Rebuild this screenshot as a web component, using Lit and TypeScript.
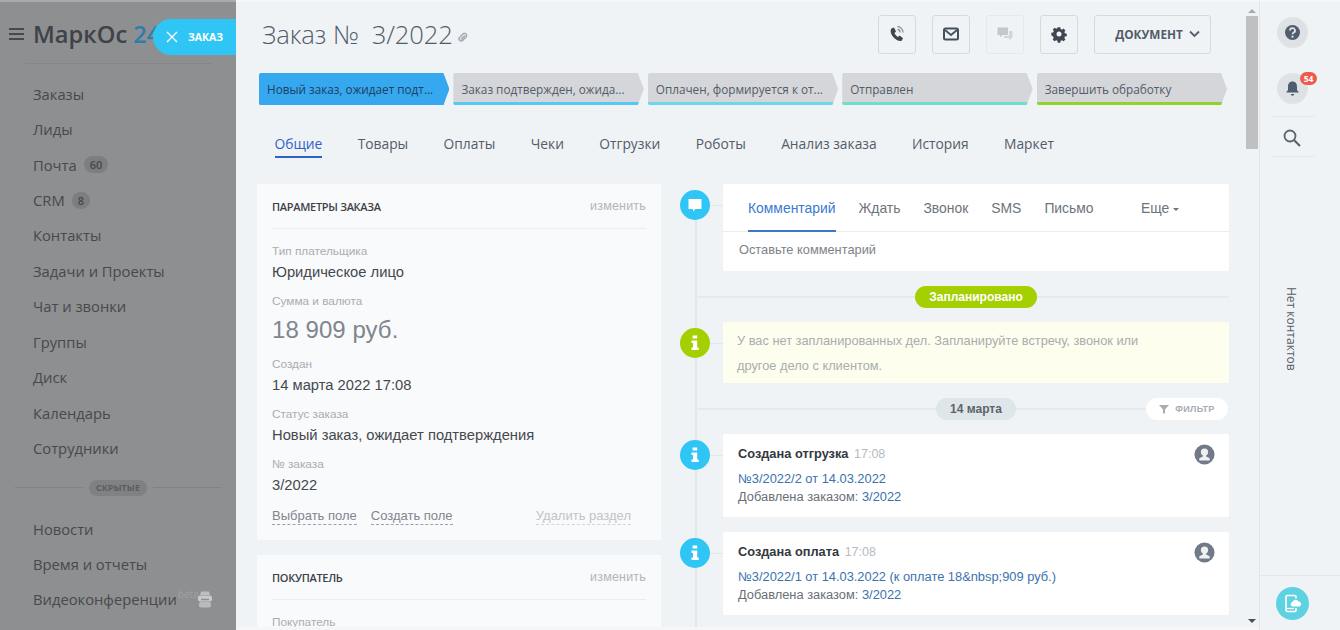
import { LitElement, html, css, svg } from "lit";
import { customElement } from "lit/decorators.js";

const person = html`<svg class="person" viewBox="0 0 22 22"><circle cx="11" cy="11" r="10.5" fill="#707b87"/><circle cx="11" cy="8.4" r="3.8" fill="#eef1f3"/><path d="M9.6 11h2.8l.4 2.2 3.6 1.6v2.4H5.6v-2.4l3.6-1.6z" fill="#eef1f3"/></svg>`;
const infoGlyph = svg`<path d="M12.6 7.5h4.6v2.9h-4.6zM12.6 12.4h4.6v7.2h1.5v2.5h-7.2v-2.5h1.5v-4.7h-1.5v-2.5h1.1z" fill="#fff"/>`;
const info = (c: string) => html`<svg class="node" viewBox="0 0 30 30"><ellipse cx="15" cy="15" rx="15" ry="15" fill="${c}"/>${infoGlyph}</svg>`;

@customElement("app-root")
export class AppRoot extends LitElement {
  static styles = css`
    :host { display: block; width: 1340px; height: 630px; overflow: hidden; font-family: "Liberation Sans", Arial, sans-serif; }
    * { box-sizing: border-box; }
    .page { position: relative; display: grid; grid-template-columns: 236px 1fr 81px; width: 1340px; height: 630px; overflow: hidden; background: #eff3f6; }
    .side { background: #8e8f91; border-top: 2px solid #a9aaac; color: #47494d; font-family: "Open Sans", sans-serif; font-size: 14.75px; overflow: hidden; }
    .logo { display: flex; align-items: center; gap: 9px; height: 61px; padding: 2px 0 0 9px; font-size: 23.7px; font-weight: 600; color: #3e4349; white-space: nowrap; }
    .logo b { font-weight: 600; color: #2f7dab; }
    .burger { width: 15px; height: 12px; border-top: 2px solid #45484c; border-bottom: 2px solid #45484c; position: relative; flex: none; }
    .burger::after { content: ""; position: absolute; left: 0; right: 0; top: 3px; height: 2px; background: #45484c; }
    .logo-line { height: 1px; margin: 0 24px 12px 25px; background: #858688; }
    .item { display: flex; align-items: center; gap: 7px; height: 35.45px; padding-left: 33px; white-space: nowrap; }
    .count { font-size: 11px; font-weight: 600; height: 17px; line-height: 17px; padding: 0 6px; border-radius: 9px; background: #7d7e80; color: #46484b; }
    .hidden-row { display: flex; align-items: center; gap: 6px; padding: 0 15px; margin: 14px 0 15px; }
    .hidden-row i { flex: 1; height: 1px; background: #808183; }
    .hidden-row span { font-size: 9px; font-weight: 700; line-height: 16px; height: 16px; padding: 0 7px; border-radius: 8px; background: #808183; color: #5b5d60; }
    .beta { font-size: 10px; line-height: 12px; color: #a0a1a3; margin: -10px 0 0 -6px; flex: none; }
    .vid { margin-left: -9px; width: 16px; height: 19px; flex: none; }

    .pill { position: absolute; left: 153px; top: 19px; width: 83px; height: 36px; border-radius: 18px 0 0 18px; background: #2fc6f6; display: flex; align-items: center; gap: 10px; padding-left: 13px; color: #fff; font: 700 10.5px "Open Sans", sans-serif; }
    .pill svg { width: 12px; height: 12px; }

    .main { position: relative; min-width: 0; border-top: 2px solid #f6f7f8; border-bottom: 3px solid #f4f6f7; padding: 0 0 0 21px; overflow: hidden; }
    .scroll { position: absolute; right: 1px; top: 0; bottom: 0; width: 13px; display: flex; flex-direction: column; align-items: center; padding-top: 7px; }
    .arr { width: 0; height: 0; border-left: 4px solid transparent; border-right: 4px solid transparent; }
    .arr.up { border-bottom: 4px solid #a8acaf; }
    .arr.down { border-top: 4px solid #4b4f53; position: absolute; bottom: 4px; }
    .thumb { width: 12px; height: 133px; margin-top: 3px; background: #bfc0c1; }

    .head { display: flex; align-items: center; height: 52px; margin-top: 6px; margin-right: 48px; padding-left: 5px; }
    .title { font: 300 25.6px "Open Sans", sans-serif; color: #525c69; letter-spacing: -.1px; white-space: pre; }
    .clip { width: 12px; height: 12px; margin: 6px 0 0 4px; }
    .spacer { flex: 1; }
    .btn { width: 38px; height: 39px; border: 1.5px solid #d6dade; border-radius: 3px; display: flex; align-items: center; justify-content: center; margin-left: 16px; }
    .btn.off { border-color: #e6e9ec; }
    .btn svg { width: 18px; height: 18px; }
    .doc { width: 117px; gap: 6px; font: 700 11.8px "Open Sans", sans-serif; color: #535c69; padding-left: 10px; }
    .doc svg { width: 11px; height: 8px; }

    .stages { display: flex; gap: 4px; margin: 13px 32px 0 2px; height: 32px; }
    .stage { position: relative; flex: 1; min-width: 0; height: 32px; padding: 8px 0 0 8px; background: #d4d6d9; color: #535c69; font: 400 11.75px/16px "Open Sans", sans-serif; white-space: nowrap; overflow: hidden; clip-path: polygon(0 0, calc(100% - 6px) 0, 100% 50%, calc(100% - 6px) 100%, 0 100%); border-radius: 2px; }
    .stage::after { content: ""; position: absolute; left: 0; right: 0; bottom: 0; height: 3px; background: var(--c); }
    .stage.on { background: #36a8f0; color: #1e3f5e; }

    .tabs { display: flex; gap: 35.3px; margin: 27px 0 0 17.5px; height: 26px; font: 400 13.8px/24px "Open Sans", sans-serif; color: #535c69; }
    .tabs span { white-space: nowrap; height: 26px; }
    .tabs .on { color: #2d63c8; border-bottom: 2px solid #2d63c8; }

    .cols { display: flex; gap: 19px; margin-top: 26px; align-items: flex-start; }
    .left { width: 404px; flex: none; display: flex; flex-direction: column; gap: 15px; }
    .card { background: #f9fafb; padding: 0 15px; }
    .card-h { display: flex; justify-content: space-between; align-items: center; height: 45px; border-bottom: 1px solid #eaedef; }
    .card-h b { font: 600 11px "Open Sans", sans-serif; color: #3c4249; letter-spacing: -.3px; }
    .card-h span { font-size: 12.5px; color: #b1b5b9; letter-spacing: .2px; }
    .lab { font-size: 11.8px; color: #a8adb3; line-height: 15px; margin-top: 12px; }
    .card-h + .lab { margin-top: 14.5px; }
    .val { font-size: 14.75px; color: #45494e; line-height: 20px; margin-top: 3px; }
    .sum { font-size: 24px; color: #80868e; line-height: 33px; margin-top: 4px; letter-spacing: .05px; }
    .sum + .lab { margin-top: 11.5px; }
    .acts { display: flex; gap: 14px; height: 45px; padding: 12.5px 15px 0 0; font-size: 13px; color: #80868e; }
    .acts span { height: 17px; border-bottom: 1px dashed #9ba1a7; }
    .acts .del { margin-left: auto; color: #c0c4c8; border-bottom-color: #d2d5d8; }
    .buyer { height: 90px; }

    .right { position: relative; width: 549px; flex: none; margin-right: 30px; }
    .line { position: absolute; left: 15px; top: 20px; height: 600px; width: 2px; background: #e1e6e9; }
    .row { position: relative; padding-left: 43px; display: block; }
    .node { position: absolute; left: 0; width: 30px; height: 30px; display: block; }
    .row::before { content: ""; position: absolute; left: 17px; width: 26px; height: 1px; background: #e1e6e9; top: 21px; }
    .box { background: #fff; border-radius: 2px; }
    .ctabs { display: flex; height: 48px; padding-left: 25px; border-bottom: 1px solid #e9edf0; font-size: 13.9px; line-height: 48px; color: #6d737a; }
    .ctabs span { margin-right: 23px; white-space: nowrap; }
    .ctabs .on { color: #3b78cf; border-bottom: 2px solid #3b78cf; height: 48px; }
    .ctabs .more { margin: 0; position: absolute; left: 461px; }
    .more::after { content: ""; display: inline-block; margin-left: 4px; vertical-align: 2px; border-left: 3px solid transparent; border-right: 3px solid transparent; border-top: 3px solid #6d737a; }
    .hint { height: 39px; padding-left: 16px; font-size: 12.8px; line-height: 36px; color: #7c8289; }
    .sep { position: relative; display: flex; justify-content: center; align-items: center; height: 22px; margin-left: 15px; padding-left: 28px; }
    .sep::before { content: ""; position: absolute; left: 0; right: 0; top: 10px; height: 2px; background: #e6eaed; }
    .tag { position: relative; height: 22px; border-radius: 11px; font-size: 12px; font-weight: 700; line-height: 22px; padding: 0 14px; }
    .green { background: #a4cf00; color: #fff; }
    .date { background: #dfe6e9; color: #5d6369; width: 80px; padding: 0; text-align: center; }
    .filter { position: absolute; right: 1px; top: 0; width: 82px; height: 22px; border-radius: 11px; background: #fff; color: #a8adb2; font-size: 9px; font-weight: 700; line-height: 22px; display: flex; align-items: center; justify-content: center; gap: 6px; letter-spacing: .3px; }
    .filter svg { width: 10px; height: 9px; }
    .yellow { background: #fefeee; height: 61px; padding: 6px 14px; font-size: 12.8px; line-height: 25px; color: #a9adaf; }
    .ev { position: relative; height: 83px; padding: 10px 15px; font-size: 12.85px; line-height: 18px; color: #6a7076; }
    .ev h4 { margin: 0 0 6px; font-size: 12.8px; line-height: 20px; font-weight: 700; color: #33383d; }
    .ev h4 span { font-weight: 400; color: #b7bbbf; font-size: 12.5px; margin-left: 2px; }
    .ev a { color: #3b72ad; }
    .person { position: absolute; right: 14px; top: 10px; width: 21px; height: 21px; }
    .pin { position: absolute; left: 0; top: 6px; display: block; }

    .rail { position: relative; border-left: 1px solid #e2e6e9; background: #f0f3f6; border-top: 2px solid #f6f7f8; display: flex; flex-direction: column; align-items: center; padding: 0 15px 0 0; }
    .cir { width: 31px; height: 31px; border-radius: 50%; background: #dfe2e5; display: flex; align-items: center; justify-content: center; flex: none; }
    .cir svg { width: 17px; height: 17px; }
    .help { margin-top: 15px; }
    .bell { position: relative; margin-top: 25px; }
    .badge { position: absolute; left: 23px; top: -1px; height: 13px; width: 17px; border-radius: 7px; background: #ef5a4c; color: #fff; font: 700 8.5px/13px "Open Sans", sans-serif; text-align: center; }
    .rline { height: 1px; width: 44px; background: #e5e8ea; flex: none; }
    .search { width: 20px; height: 20px; margin: 11px 0 8px -1px; flex: none; }
    .none { writing-mode: vertical-rl; font: 400 12px "Open Sans", sans-serif; color: #535c69; margin: 130px 2px 0 0; white-space: nowrap; height: 90px; }
    .rfoot { position: absolute; left: 0; right: 0; top: 573px; height: 1px; background: #e5e8ea; }
    .phone { position: absolute; left: 16px; top: 585px; width: 33px; height: 33px; border-radius: 50%; background: #5fd2e2; display: flex; align-items: center; justify-content: center; }
    .phone svg { width: 21px; height: 21px; }
  `;

  render() {
    const nav = ["Заказы", "Лиды", "Почта|60", "CRM|8", "Контакты", "Задачи и Проекты", "Чат и звонки", "Группы", "Диск", "Календарь", "Сотрудники"];
    const stages: [string, string][] = [
      ["Новый заказ, ожидает подт...", "#36a8f0"], ["Заказ подтвержден, ожида...", "#55c8f4"],
      ["Оплачен, формируется к от...", "#6fd5e8"], ["Отправлен", "#6fe0c8"], ["Завершить обработку", "#8fd32c"],
    ];
    const tabs = ["Товары", "Оплаты", "Чеки", "Отгрузки", "Роботы", "Анализ заказа", "История", "Маркет"];
    return html`<div class="page">
      <aside class="side">
        <div class="logo"><span class="burger"></span><span>МаркОс <b>24</b></span></div>
        <div class="logo-line"></div>
        ${nav.map((n) => { const [t, c] = n.split("|"); return html`<div class="item">${t}${c ? html`<span class="count">${c}</span>` : ""}</div>`; })}
        <div class="hidden-row"><i></i><span>СКРЫТЫЕ</span><i></i></div>
        <div class="item">Новости</div>
        <div class="item">Время и отчеты</div>
        <div class="item">Видеоконференции<span class="beta">beta</span>
          <svg class="vid" viewBox="0 0 16 19"><path d="M4 1.5h8l1 3.500H3z" fill="#bdbec0"/><rect x="1" y="5.500" width="14" height="6" rx="2" fill="#c9cacb"/><rect x="2" y="12" width="12" height="5.500" rx="2" fill="#b9babc"/><path d="M4 9.500h8" stroke="#8e8f91" stroke-width="1.500"/></svg></div>
      </aside>

      <main class="main">
        <div class="head">
          <span class="title">Заказ №  3/2022</span>
          <svg class="clip" viewBox="0 0 12 12"><path d="M4 8.500l4-4M2.800 6.300L6 3a2 2 0 0 1 3 3L5.600 9.400a2 2 0 0 1-2.900-3" fill="none" stroke="#a5abb1" stroke-width="1.500"/></svg>
          <span class="spacer"></span>
          <span class="btn"><svg viewBox="0 0 18 18"><path d="M3.500 3.500l2.500-1 2 4L6.500 8c.5 1.500 2 3.300 3.600 4l1.600-1.400 3.300 2.600-1.200 2.300c-1 1-3 .6-5-.5C6 13.500 3.500 10.500 2.800 7.500 2.500 6 2.700 4.500 3.500 3.500z" fill="#3d4651"/><path d="M9.500 1.500a6 6 0 0 1 5.500 6M9.500 4.500a3 3 0 0 1 2.700 3" fill="none" stroke="#8a929b" stroke-width="1.300"/></svg></span>
          <span class="btn"><svg viewBox="0 0 18 18"><rect x="2" y="3.500" width="14" height="11" rx="1.500" fill="none" stroke="#46505c" stroke-width="2"/><path d="M3 5l6 5 6-5" fill="none" stroke="#46505c" stroke-width="1.800"/></svg></span>
          <span class="btn off"><svg viewBox="0 0 18 18"><path d="M1.500 2.500h10.500v7.500H6.500L4 12v-2H1.500z" fill="#c3c8cc"/><path d="M13 6h3.500v7H15v2.500L12.500 13H8v-2h5z" fill="#d2d6d9"/></svg></span>
          <span class="btn"><svg viewBox="0 0 18 18"><path d="M7.500 1h3l.4 2.200 1.500.7 1.900-1.200 2.100 2.100-1.200 1.900.6 1.500 2.200.4v3l-2.200.4-.6 1.500 1.200 1.900-2.100 2.100-1.900-1.200-1.500.6-.4 2.200h-3l-.4-2.200-1.500-.6-1.900 1.200-2.100-2.100 1.200-1.900-.7-1.500L0 10.500v-3l2.200-.4.700-1.500-1.200-1.900 2.100-2.100 1.900 1.200 1.400-.7z" transform="translate(1.300 1.300) scale(.86)" fill="#3d4651"/><circle cx="9" cy="9" r="2.500" fill="#eff3f6"/></svg></span>
          <span class="btn doc">ДОКУМЕНТ<svg viewBox="0 0 11 8"><path d="M1 1.500l4.500 4.500L10 1.500" fill="none" stroke="#535c69" stroke-width="1.800"/></svg></span>
        </div>
        <div class="stages">
          ${stages.map(([t, c], i) => html`<div class="stage ${i === 0 ? "on" : ""}" style="--c:${c}">${t}</div>`)}
        </div>
        <div class="tabs"><span class="on">Общие</span>${tabs.map((t) => html`<span>${t}</span>`)}</div>
        <div class="cols">
          <div class="left">
            <section class="card">
              <div class="card-h"><b>ПАРАМЕТРЫ ЗАКАЗА</b><span>изменить</span></div>
              <div class="lab">Тип плательщика</div><div class="val">Юридическое лицо</div>
              <div class="lab">Сумма и валюта</div><div class="sum">18 909 руб.</div>
              <div class="lab">Создан</div><div class="val">14 марта 2022 17:08</div>
              <div class="lab">Статус заказа</div><div class="val">Новый заказ, ожидает подтверждения</div>
              <div class="lab">№ заказа</div><div class="val">3/2022</div>
              <div class="acts"><span>Выбрать поле</span><span>Создать поле</span><span class="del">Удалить раздел</span></div>
            </section>
            <section class="card buyer">
              <div class="card-h"><b>ПОКУПАТЕЛЬ</b><span>изменить</span></div>
              <div class="lab">Покупатель</div>
            </section>
          </div>
          <div class="right">
            <div class="line"></div>
            <div class="row">
              <svg class="node" style="top:6px" viewBox="0 0 30 30"><circle cx="15" cy="15" r="15" fill="#2fc6f6"/><path d="M8.500 9h13v10h-6l-2.500 2.500V19H8.500z" fill="#fff"/></svg>
              <div class="box">
                <div class="ctabs"><span class="on">Комментарий</span><span>Ждать</span><span>Звонок</span><span>SMS</span><span>Письмо</span><span class="more">Еще</span></div>
                <div class="hint">Оставьте комментарий</div>
              </div>
            </div>
            <div class="sep" style="margin-top:15px"><span class="tag green">Запланировано</span></div>
            <div class="row" style="margin-top:14px">
              <svg class="node" style="top:6px" viewBox="0 0 30 30"><circle cx="15" cy="15" r="15" fill="#a4cf00"/>${infoGlyph}</svg>
              <div class="box yellow">У вас нет запланированных дел. Запланируйте встречу, звонок или<br>другое дело с клиентом.</div>
            </div>
            <div class="sep" style="margin-top:15px"><span class="tag date">14 марта</span>
              <span class="filter"><svg viewBox="0 0 10 9"><path d="M0 0h10L6 4.500V9L4 8V4.500z" fill="#a8adb2"/></svg>ФИЛЬТР</span></div>
            <div class="row" style="margin-top:14px">
              <span class="pin">${info("#2fc6f6")}</span>
              <div class="box ev"><h4>Создана отгрузка <span>17:08</span></h4><a>№3/2022/2 от 14.03.2022</a><br>Добавлена заказом: <a>3/2022</a>${person}</div>
            </div>
            <div class="row" style="margin-top:15px">
              <span class="pin">${info("#2fc6f6")}</span>
              <div class="box ev"><h4>Создана оплата <span>17:08</span></h4><a>№3/2022/1 от 14.03.2022 (к оплате 18&amp;nbsp;909 руб.)</a><br>Добавлена заказом: <a>3/2022</a>${person}</div>
            </div>
          </div>
        </div>
        <div class="scroll"><span class="arr up"></span><span class="thumb"></span><span class="arr down"></span></div>
      </main>

      <aside class="rail">
        <span class="cir help"><svg viewBox="0 0 17 17"><circle cx="8.500" cy="8.500" r="7.500" fill="#4f5d6e"/><path d="M6 6.500a2.500 2.300 0 1 1 3.700 2c-.8.500-1.200.8-1.200 1.800" fill="none" stroke="#dfe2e5" stroke-width="1.800"/><circle cx="8.500" cy="12.700" r="1.100" fill="#dfe2e5"/></svg></span>
        <span class="cir bell"><svg viewBox="0 0 17 17"><path d="M8.500 1.500c3 0 4.500 2.300 4.500 5v3.500l2 2.500H2l2-2.500V6.500c0-2.700 1.500-5 4.500-5z" fill="#4f5d6e"/><path d="M6.800 14h3.400a1.700 1.700 0 0 1-3.400 0z" fill="#4f5d6e"/></svg><span class="badge">54</span></span>
        <span class="rline" style="margin-top:12px"></span>
        <svg class="search" viewBox="0 0 20 20"><circle cx="8" cy="8" r="5.500" fill="none" stroke="#5a6570" stroke-width="1.800"/><path d="M12 12l6 6" stroke="#5a6570" stroke-width="2.200"/></svg>
        <span class="rline"></span>
        <span class="none">Нет контактов</span>
        <span class="rfoot"></span>
        <span class="phone"><svg viewBox="0 0 21 21"><path d="M14 5.500V4a1.500 1.500 0 0 0-1.500-1.500h-7A1.500 1.500 0 0 0 4 4v13a1.500 1.500 0 0 0 1.500 1.500h7A1.500 1.500 0 0 0 14 17v-2" fill="none" stroke="#fff" stroke-width="1.600"/><path d="M4 15.500h8" stroke="#fff" stroke-width="1.300"/><path d="M10.500 13.500a2.300 2.300 0 0 1 0-4.500 3.200 3.200 0 0 1 6-.5 2.600 2.600 0 0 1 1 5z" fill="#fff"/></svg></span>
      </aside>

      <div class="pill"><svg viewBox="0 0 12 12"><path d="M1 1l10 10M11 1L1 11" stroke="#fff" stroke-width="1.400"/></svg>ЗАКАЗ</div>
    </div>`;
  }
}
